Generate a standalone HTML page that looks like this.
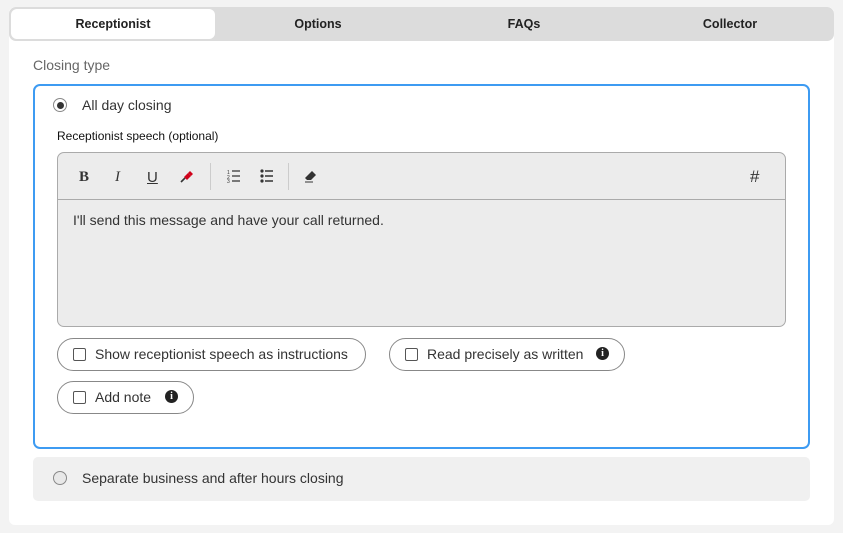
<!DOCTYPE html>
<html><head><meta charset="utf-8"><style>
*{box-sizing:border-box;margin:0;padding:0}
body{width:843px;height:533px;background:#f3f3f3;font-family:"Liberation Sans",Roboto,sans-serif;position:relative;overflow:hidden;color:#333}
.card{position:absolute;left:9px;top:7px;width:825px;height:518px;background:#fff;border-radius:6px}
.tabs{position:absolute;left:9px;top:7px;width:825px;height:34px;background:#dcdcdc;border-radius:7px}
.tab{position:absolute;top:0;height:34px;line-height:35px;font-size:12.5px;font-weight:bold;color:#222;text-align:center;width:206px}
.tab.act{background:#fff;border-radius:6px;top:2px;height:30px;line-height:31px;left:2px;width:204px}
.abs{position:absolute}
.blue{position:absolute;left:33px;top:84px;width:777px;height:365px;border:2px solid #3d9bf2;border-radius:7px}
.radio{position:absolute;width:14px;height:14px;border-radius:50%;border:1px solid #888;background:#fff}
.ed{position:absolute;left:57px;top:152px;width:729px;height:175px;border:1px solid #aaa;border-radius:7px;background:#ececec}
.tb{position:absolute;left:0;top:0;width:100%;height:47px;border-bottom:1px solid #aaa}
.pill{position:absolute;height:33px;border:1px solid #888;border-radius:17px;font-size:14px;line-height:31px;color:#333}
.cb{position:absolute;top:9px;width:13px;height:13px;border:1px solid #555;border-radius:2px;background:#fff}
.info{position:absolute;top:8px;width:13px;height:13px;border-radius:50%;background:#222;color:#fff;font-size:10px;font-weight:bold;line-height:13px;text-align:center;font-family:"Liberation Serif",serif}
.ic{position:absolute;top:16px;font-size:15px;color:#333}
</style></head><body>
<div class="card"></div>
<div class="tabs">
<div class="tab act">Receptionist</div>
<div class="tab" style="left:206px">Options</div>
<div class="tab" style="left:412px">FAQs</div>
<div class="tab" style="left:618px">Collector</div>
</div>
<div class="abs" style="left:33px;top:57px;font-size:14px;color:#666">Closing type</div>
<div class="blue"></div>
<div class="radio" style="left:53px;top:98px"><div style="position:absolute;left:2.5px;top:2.5px;width:7px;height:7px;border-radius:50%;background:#333"></div></div>
<div class="abs" style="left:82px;top:97px;font-size:14px;color:#333">All day closing</div>
<div class="abs" style="left:57px;top:129px;font-size:12px;color:#111">Receptionist speech (optional)</div>
<div class="ed"><div class="tb">
<span class="ic" style="left:21px;font-weight:bold;font-family:'Liberation Serif',serif">B</span>
<span class="ic" style="left:57px;font-style:italic;font-family:'Liberation Serif',serif">I</span>
<span class="ic" style="left:89px;text-decoration:underline;font-family:'Liberation Sans'">U</span>
<svg class="abs" style="left:122px;top:16px" width="14" height="14" viewBox="0 0 14 14"><path d="M1 13 L5 9" stroke="#333" stroke-width="1.6"/><path d="M4 8 L8 4 L11 7 L7 11Z" fill="#d0021b"/><path d="M8 4 L10 2 L13 5 L11 7Z" fill="#d0021b"/></svg>
<div class="abs" style="left:152px;top:10px;width:1px;height:27px;background:#ccc"></div>
<svg class="abs" style="left:169px;top:16px" width="14" height="14" viewBox="0 0 14 14"><path d="M5 2H13M5 7H13M5 12H13" stroke="#333" stroke-width="1.3"/><text x="0" y="5" font-size="5" fill="#333">1</text><text x="0" y="10" font-size="5" fill="#333">2</text><text x="0" y="14" font-size="5" fill="#333">3</text></svg>
<svg class="abs" style="left:202px;top:16px" width="14" height="14" viewBox="0 0 14 14"><circle cx="2" cy="2" r="1.6" fill="#333"/><circle cx="2" cy="7" r="1.6" fill="#333"/><circle cx="2" cy="12" r="1.6" fill="#333"/><path d="M5 2H13M5 7H13M5 12H13" stroke="#333" stroke-width="1.4"/></svg>
<div class="abs" style="left:230px;top:10px;width:1px;height:27px;background:#ccc"></div>
<svg class="abs" style="left:246px;top:17px" width="14" height="13" viewBox="0 0 14 13"><path d="M8 1 L12 5 L7 10 L3 10 L1 8Z" fill="#333"/><path d="M1 12H9" stroke="#333"/></svg>
<span class="ic" style="left:692px;font-size:17px;top:14px">#</span>
</div>
<div class="abs" style="left:15px;top:59px;font-size:14px;color:#333">I'll send this message and have your call returned.</div>
</div>
<div class="pill" style="left:57px;top:338px;width:309px"><div class="cb" style="left:15px"></div><span style="position:absolute;left:37px">Show receptionist speech as instructions</span></div>
<div class="pill" style="left:389px;top:338px;width:236px"><div class="cb" style="left:15px"></div><span style="position:absolute;left:37px">Read precisely as written</span><div class="info" style="left:206px">i</div></div>
<div class="pill" style="left:57px;top:381px;width:137px"><div class="cb" style="left:15px"></div><span style="position:absolute;left:37px">Add note</span><div class="info" style="left:107px">i</div></div>
<div class="abs" style="left:33px;top:457px;width:777px;height:44px;background:#f0f0f0;border-radius:5px"></div>
<div class="radio" style="left:53px;top:471px;background:#e8e8e8;border-color:#888"></div>
<div class="abs" style="left:82px;top:470px;font-size:14px;color:#333">Separate business and after hours closing</div>
</body></html>
